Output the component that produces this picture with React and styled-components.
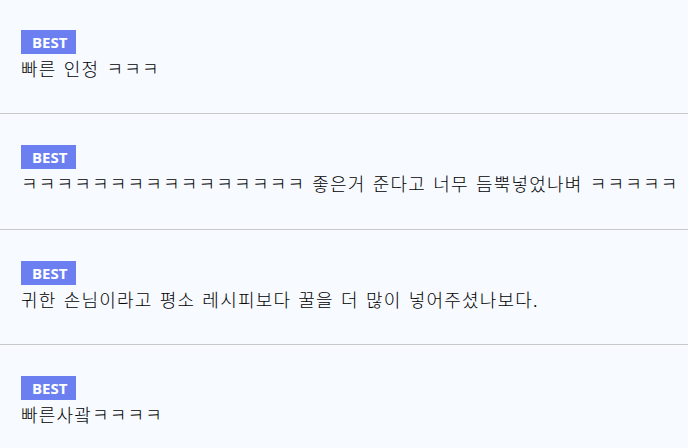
import styled, { createGlobalStyle } from 'styled-components';

const GlobalStyle = createGlobalStyle`
  html, body {
    margin: 0;
    padding: 0;
    background: #f7faff;
  }
  body {
    font-family: 'Noto Sans CJK KR', 'Noto Sans', sans-serif;
  }
`;

//ReviewList
const List = styled.ul`
  list-style: none;
  margin: 0;
  padding: 0;
  width: 688px;
  overflow: hidden;
`;

//ReviewItem
const Item = styled.li`
  padding: 31px 21px 33.33px;
  border-bottom: 1px solid #c9c9c9;
  &:first-child {
    padding-top: 30px;
  }
`;

//BestBadge
const Badge = styled.span`
  display: inline-block;
  height: 24px;
  line-height: 24px;
  padding: 0 9px 0 11px;
  background: #6c7ff0;
  color: #fff;
  font-family: 'Open Sans', 'Noto Sans', sans-serif;
  font-weight: 700;
  font-size: 15px;
  vertical-align: top;
`;

//ReviewText
const Text = styled.p`
  margin: 2px 0 0;
  font-family: 'Noto Sans CJK KR', sans-serif;
  font-weight: 300;
  font-size: 18px;
  line-height: 24px;
  letter-spacing: 1.2px;
  word-spacing: 2px;
  color: #000;
  white-space: nowrap;
`;

const reviews = [
  '빠른 인정 ㅋㅋㅋ',
  'ㅋㅋㅋㅋㅋㅋㅋㅋㅋㅋㅋㅋㅋㅋㅋㅋ 좋은거 준다고 너무 듬뿍넣었나벼 ㅋㅋㅋㅋㅋ',
  '귀한 손님이라고 평소 레시피보다 꿀을 더 많이 넣어주셨나보다.',
  '빠른사괔ㅋㅋㅋㅋ',
];

export default function App() {
  return (
    <>
      <GlobalStyle />
      <List>
        {reviews.map((text, i) => (
          <Item key={i}>
            <Badge>BEST</Badge>
            <Text>{text}</Text>
          </Item>
        ))}
      </List>
    </>
  );
}
